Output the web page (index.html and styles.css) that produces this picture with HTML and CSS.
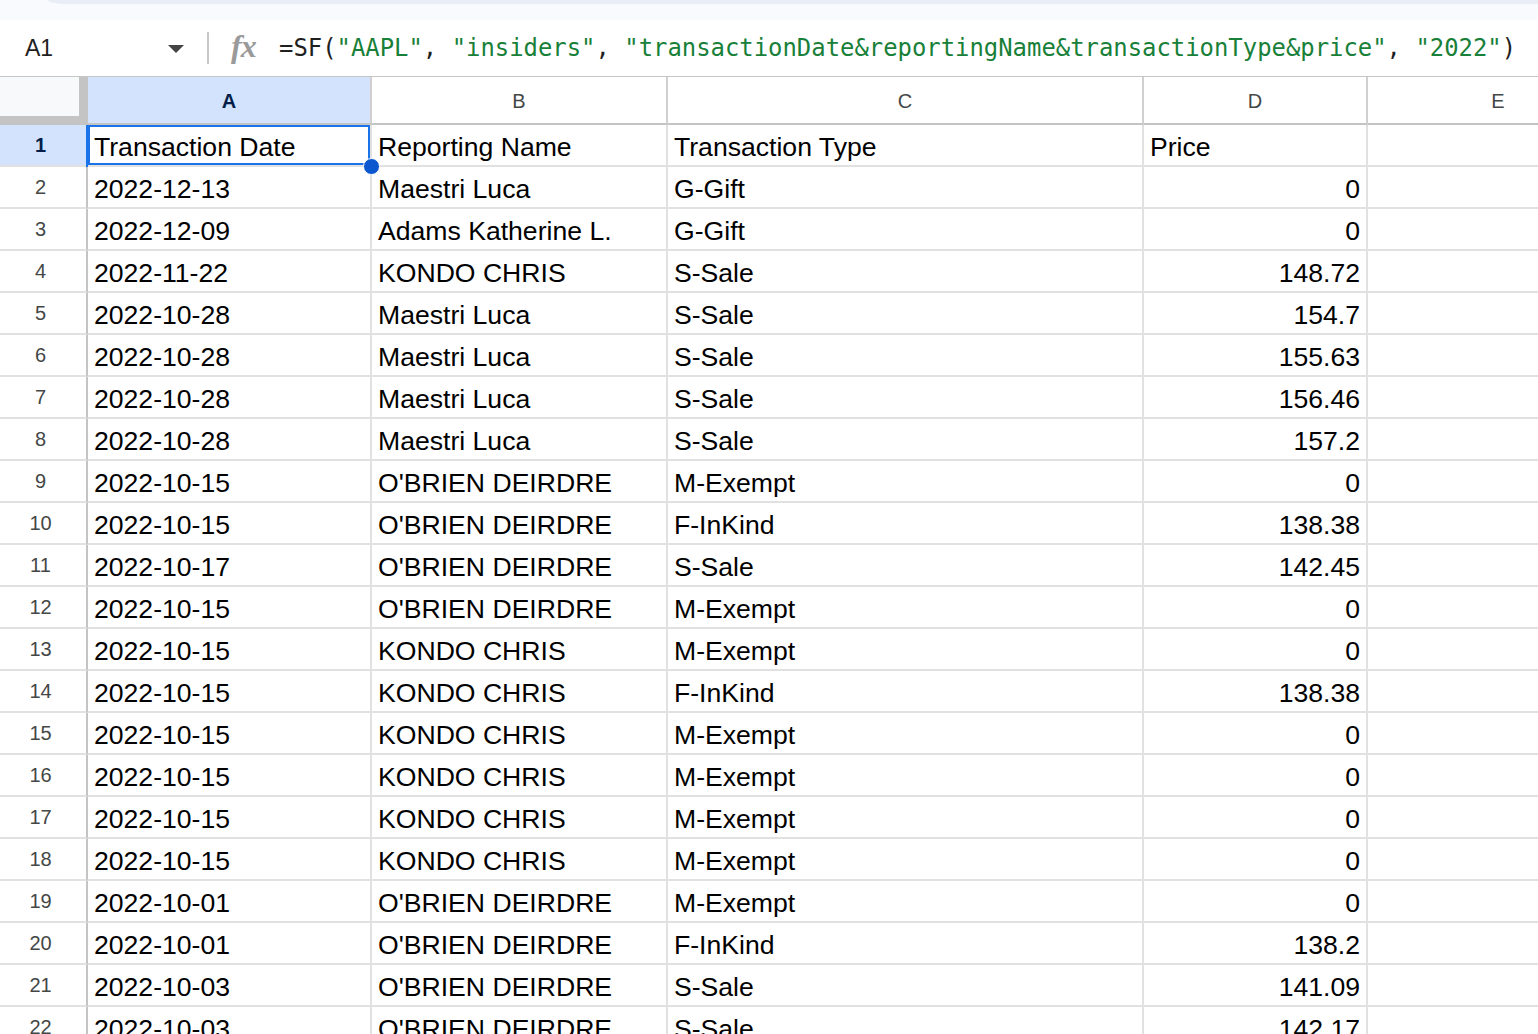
FILE: index.html
```html
<!DOCTYPE html>
<html lang="en">
<head>
    <meta charset="UTF-8">
    <title>Insiders - Sheet</title>
    <link rel="stylesheet" href="styles.css">
</head>
<body>
    <div class="top-strip"><div class="top-tab"></div></div>

    <div class="formula-bar">
        <div class="name-box">
            <span class="cell-ref">A1</span>
            <span class="drop-arrow"></span>
        </div>
        <div class="fx">fx</div>
        <div class="formula">=SF(<span class="str">"AAPL"</span>, <span class="str">"insiders"</span>, <span class="str">"transactionDate&amp;reportingName&amp;transactionType&amp;price"</span>, <span class="str">"2022"</span>)</div>
    </div>

    <div class="sheet">
        <div class="row col-heads">
            <div class="corner"></div>
            <div class="col-head active">A</div>
            <div class="col-head">B</div>
            <div class="col-head">C</div>
            <div class="col-head">D</div>
            <div class="col-head">E</div>
        </div>

        <div class="row">
            <div class="row-head active">1</div>
            <div class="cell selected">Transaction Date<span class="handle"></span></div>
            <div class="cell">Reporting Name</div>
            <div class="cell">Transaction Type</div>
            <div class="cell">Price</div>
            <div class="cell"></div>
        </div>
        <div class="row">
            <div class="row-head">2</div>
            <div class="cell">2022-12-13</div><div class="cell">Maestri Luca</div><div class="cell">G-Gift</div><div class="cell num">0</div><div class="cell"></div>
        </div>
        <div class="row">
            <div class="row-head">3</div>
            <div class="cell">2022-12-09</div><div class="cell">Adams Katherine L.</div><div class="cell">G-Gift</div><div class="cell num">0</div><div class="cell"></div>
        </div>
        <div class="row">
            <div class="row-head">4</div>
            <div class="cell">2022-11-22</div><div class="cell">KONDO CHRIS</div><div class="cell">S-Sale</div><div class="cell num">148.72</div><div class="cell"></div>
        </div>
        <div class="row">
            <div class="row-head">5</div>
            <div class="cell">2022-10-28</div><div class="cell">Maestri Luca</div><div class="cell">S-Sale</div><div class="cell num">154.7</div><div class="cell"></div>
        </div>
        <div class="row">
            <div class="row-head">6</div>
            <div class="cell">2022-10-28</div><div class="cell">Maestri Luca</div><div class="cell">S-Sale</div><div class="cell num">155.63</div><div class="cell"></div>
        </div>
        <div class="row">
            <div class="row-head">7</div>
            <div class="cell">2022-10-28</div><div class="cell">Maestri Luca</div><div class="cell">S-Sale</div><div class="cell num">156.46</div><div class="cell"></div>
        </div>
        <div class="row">
            <div class="row-head">8</div>
            <div class="cell">2022-10-28</div><div class="cell">Maestri Luca</div><div class="cell">S-Sale</div><div class="cell num">157.2</div><div class="cell"></div>
        </div>
        <div class="row">
            <div class="row-head">9</div>
            <div class="cell">2022-10-15</div><div class="cell">O'BRIEN DEIRDRE</div><div class="cell">M-Exempt</div><div class="cell num">0</div><div class="cell"></div>
        </div>
        <div class="row">
            <div class="row-head">10</div>
            <div class="cell">2022-10-15</div><div class="cell">O'BRIEN DEIRDRE</div><div class="cell">F-InKind</div><div class="cell num">138.38</div><div class="cell"></div>
        </div>
        <div class="row">
            <div class="row-head">11</div>
            <div class="cell">2022-10-17</div><div class="cell">O'BRIEN DEIRDRE</div><div class="cell">S-Sale</div><div class="cell num">142.45</div><div class="cell"></div>
        </div>
        <div class="row">
            <div class="row-head">12</div>
            <div class="cell">2022-10-15</div><div class="cell">O'BRIEN DEIRDRE</div><div class="cell">M-Exempt</div><div class="cell num">0</div><div class="cell"></div>
        </div>
        <div class="row">
            <div class="row-head">13</div>
            <div class="cell">2022-10-15</div><div class="cell">KONDO CHRIS</div><div class="cell">M-Exempt</div><div class="cell num">0</div><div class="cell"></div>
        </div>
        <div class="row">
            <div class="row-head">14</div>
            <div class="cell">2022-10-15</div><div class="cell">KONDO CHRIS</div><div class="cell">F-InKind</div><div class="cell num">138.38</div><div class="cell"></div>
        </div>
        <div class="row">
            <div class="row-head">15</div>
            <div class="cell">2022-10-15</div><div class="cell">KONDO CHRIS</div><div class="cell">M-Exempt</div><div class="cell num">0</div><div class="cell"></div>
        </div>
        <div class="row">
            <div class="row-head">16</div>
            <div class="cell">2022-10-15</div><div class="cell">KONDO CHRIS</div><div class="cell">M-Exempt</div><div class="cell num">0</div><div class="cell"></div>
        </div>
        <div class="row">
            <div class="row-head">17</div>
            <div class="cell">2022-10-15</div><div class="cell">KONDO CHRIS</div><div class="cell">M-Exempt</div><div class="cell num">0</div><div class="cell"></div>
        </div>
        <div class="row">
            <div class="row-head">18</div>
            <div class="cell">2022-10-15</div><div class="cell">KONDO CHRIS</div><div class="cell">M-Exempt</div><div class="cell num">0</div><div class="cell"></div>
        </div>
        <div class="row">
            <div class="row-head">19</div>
            <div class="cell">2022-10-01</div><div class="cell">O'BRIEN DEIRDRE</div><div class="cell">M-Exempt</div><div class="cell num">0</div><div class="cell"></div>
        </div>
        <div class="row">
            <div class="row-head">20</div>
            <div class="cell">2022-10-01</div><div class="cell">O'BRIEN DEIRDRE</div><div class="cell">F-InKind</div><div class="cell num">138.2</div><div class="cell"></div>
        </div>
        <div class="row">
            <div class="row-head">21</div>
            <div class="cell">2022-10-03</div><div class="cell">O'BRIEN DEIRDRE</div><div class="cell">S-Sale</div><div class="cell num">141.09</div><div class="cell"></div>
        </div>
        <div class="row">
            <div class="row-head">22</div>
            <div class="cell">2022-10-03</div><div class="cell">O'BRIEN DEIRDRE</div><div class="cell">S-Sale</div><div class="cell num">142.17</div><div class="cell"></div>
        </div>
    </div>
</body>
</html>
```

FILE: styles.css
```css
html, body {
    margin: 0;
    padding: 0;
    height: 100%;
    overflow: hidden;
    background: #fff;
    font-family: "Liberation Sans", Arial, sans-serif;
    color: #000;
}

/* strip left over from the toolbar above */
.top-strip {
    height: 20px;
    background: #f8fafd;
}
.top-tab {
    margin-left: 48px;
    height: 4px;
    background: #e9eef6;
    border-bottom-left-radius: 18px 4px;
}

/* formula bar */
.formula-bar {
    display: flex;
    align-items: center;
    height: 57px;
    padding-bottom: 1px;
    border-bottom: 1px solid #c4c7c5;
    box-sizing: border-box;
}
.name-box {
    display: flex;
    align-items: center;
    width: 209px;
    height: 32px;
    padding-left: 25px;
    box-sizing: border-box;
    border-right: 2px solid #c7c7c7;
    margin-top: 1px;
}
.cell-ref {
    font-size: 23px;
    color: #1f1f1f;
    flex: 1;
}
.drop-arrow {
    width: 0;
    height: 0;
    border-left: 8px solid transparent;
    border-right: 8px solid transparent;
    border-top: 8px solid #444;
    margin-right: 23px;
    margin-top: 2px;
}
.fx {
    margin-left: 22px;
    width: 48px;
    font-family: "Liberation Serif", "Times New Roman", serif;
    font-style: italic;
    font-weight: bold;
    font-size: 32px;
    color: #9a9a9a;
    letter-spacing: -1px;
    margin-top: -3px;
}
.formula {
    font-family: "DejaVu Sans Mono", "Liberation Mono", monospace;
    font-size: 23.9px;
    color: #1f1f1f;
    white-space: nowrap;
}
.formula .str {
    color: #188038;
}

/* grid */
.sheet {
    overflow: hidden;
}
.row {
    display: grid;
    grid-template-columns: 88px 284px 296px 476px 224px 262px;
    height: 42px;
}
.col-heads {
    height: 48px;
}
.corner {
    background: #f8f9fa;
    border-right: 9px solid #c4c4c4;
    border-bottom: 9px solid #c4c4c4;
}
.col-head {
    display: flex;
    align-items: center;
    justify-content: center;
    font-size: 20px;
    color: #444746;
    border-right: 2px solid #d0d0d0;
    border-bottom: 2px solid #c4c4c4;
    padding-top: 2px;
}
.col-head.active {
    background: #d3e3fd;
    color: #041e49;
    font-weight: bold;
}
.row-head {
    display: flex;
    align-items: center;
    justify-content: center;
    font-size: 20px;
    color: #444746;
    border-right: 2px solid #c4c4c4;
    border-bottom: 2px solid #e1e1e1;
    padding-right: 5px;
}
.row-head.active {
    background: #d3e3fd;
    color: #041e49;
    font-weight: bold;
}
.cell {
    display: flex;
    align-items: flex-end;
    font-size: 26.6px;
    padding: 0 6px 2px 6px;
    border-right: 2px solid #e1e1e1;
    border-bottom: 2px solid #e1e1e1;
    white-space: nowrap;
    overflow: hidden;
}
.cell.num {
    justify-content: flex-end;
}
.cell.selected {
    position: relative;
    overflow: visible;
    box-shadow: inset 0 0 0 2px #1a73e8, -2px 0 0 0 #1a73e8;
    padding-left: 6px;
}
.handle {
    position: absolute;
    right: -10px;
    bottom: -10px;
    width: 15px;
    height: 15px;
    border-radius: 50%;
    background: #0b57d0;
    border: 1px solid #fff;
    z-index: 2;
}
```
